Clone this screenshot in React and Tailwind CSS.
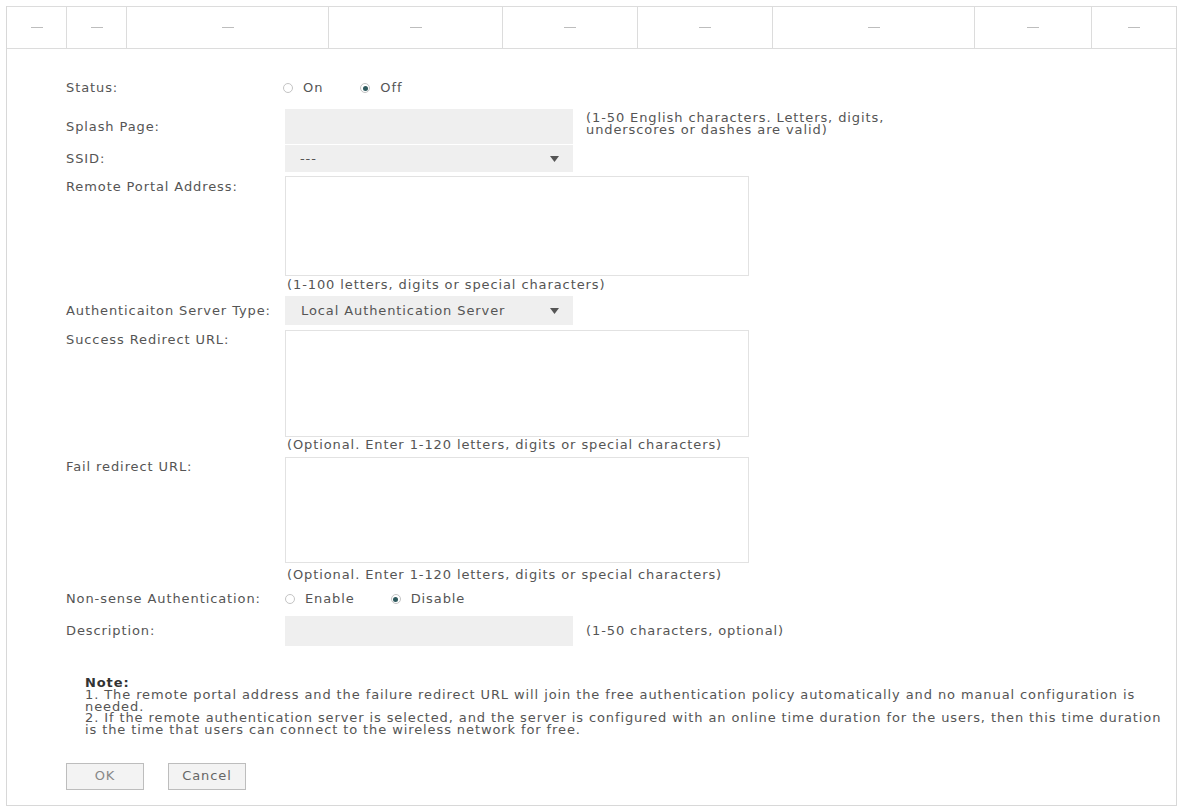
import React from "react";

const font = { fontFamily: '"DejaVu Sans", Verdana, sans-serif' };

const COLS = [60, 60, 202, 174, 135, 135, 202, 117, 86];

function Radio({ checked, label }) {
  return (
    <span className="inline-flex items-center gap-[10px]">
      <span className="grid h-[10px] w-[10px] place-items-center rounded-full border border-[#c4c4c4] bg-white">
        {checked && <span className="h-[5px] w-[5px] rounded-full bg-[#2f5a5e]" />}
      </span>
      <span>{label}</span>
    </span>
  );
}

function Arrow() {
  return (
    <svg width="9" height="6" viewBox="0 0 9 6" className="shrink-0">
      <path d="M0 0 L9 0 L4.5 6 Z" fill="#555" />
    </svg>
  );
}

function Row({ label, className = "", children }) {
  return (
    <div className={["flex", className].join(" ")}>
      <div className="w-[219px] shrink-0">{label}</div>
      <div className="flex-1">{children}</div>
    </div>
  );
}

export default function App() {
  return (
    <div className="h-[809px] w-full bg-white pl-[6px] pr-[2px] pt-[6px]" style={font}>
      <div className="flex h-[800px] flex-col border-l border-r border-b border-[#d8d8d8] text-[13px] leading-[16px] tracking-[0.9px] text-[#555]">
        <div className="flex h-[43px] border-t border-b border-[#dcdcdc]">
          {COLS.map((w, i) => (
            <div
              key={i}
              className={[
                "flex shrink-0 items-center justify-center",
                i < COLS.length - 1 ? "border-r border-[#dcdcdc]" : "flex-1",
              ].join(" ")}
              style={{ width: w }}
            >
              <span className="block h-px w-[12px] bg-[#bdbdbd]" />
            </div>
          ))}
        </div>

        <div className="flex flex-col pl-[59px] pt-[29px]">
          <Row label="Status:" className="h-[20px] items-center">
            <div className="-ml-[2px] flex items-center gap-[37px]">
              <Radio label="On" />
              <Radio checked label="Off" />
            </div>
          </Row>

          <Row label="Splash Page:" className="mt-[11px] items-center">
            <div className="flex items-start">
              <div className="h-[35px] w-[288px] bg-[#efefef]" />
              <div className="ml-[13px] mt-[3px] leading-[12px]">
                (1-50 English characters. Letters, digits,
                <br />
                underscores or dashes are valid)
              </div>
            </div>
          </Row>

          <Row label="SSID:" className="mt-[1px] items-center">
            <div className="flex h-[27px] w-[288px] items-center justify-between bg-[#efefef] pl-[15px] pr-[14px]">
              <span>---</span>
              <Arrow />
            </div>
          </Row>

          <Row label={<div className="pt-[3px]">Remote Portal Address:</div>} className="mt-[4px] items-start">
            <div className="h-[100px] w-[464px] border border-[#e2e2e2]" />
            <div className="mt-[1px] pl-[2px]">(1-100 letters, digits or special characters)</div>
          </Row>

          <Row label="Authenticaiton Server Type:" className="mt-[3px] items-center">
            <div className="flex h-[29px] w-[288px] items-center justify-between bg-[#efefef] pl-[16px] pr-[14px]">
              <span>Local Authentication Server</span>
              <Arrow />
            </div>
          </Row>

          <Row label={<div className="pt-[2px]">Success Redirect URL:</div>} className="mt-[5px] items-start">
            <div className="h-[107px] w-[464px] border border-[#e2e2e2]" />
            <div className="pl-[2px]">(Optional. Enter 1-120 letters, digits or special characters)</div>
          </Row>

          <Row label={<div className="pt-[2px]">Fail redirect URL:</div>} className="mt-[4px] items-start">
            <div className="h-[106px] w-[464px] border border-[#e2e2e2]" />
            <div className="mt-[4px] pl-[2px]">(Optional. Enter 1-120 letters, digits or special characters)</div>
          </Row>

          <Row label="Non-sense Authentication:" className="mt-[7px] h-[18px] items-center">
            <div className="flex items-center gap-[36px]">
              <Radio label="Enable" />
              <Radio checked label="Disable" />
            </div>
          </Row>

          <Row label="Description:" className="mt-[8px] items-center">
            <div className="flex items-center">
              <div className="h-[30px] w-[288px] bg-[#efefef]" />
              <span className="ml-[13px]">(1-50 characters, optional)</span>
            </div>
          </Row>

          <div className="mt-[31px] pl-[19px] pr-[2px] leading-[11.8px]">
            <div className="font-bold text-[#333]">Note:</div>
            <div>
              1. The remote portal address and the failure redirect URL will join the free authentication policy
              automatically and no manual configuration is needed.
            </div>
            <div>
              2. If the remote authentication server is selected, and the server is configured with an online time
              duration for the users, then this time duration is the time that users can connect to the wireless
              network for free.
            </div>
          </div>

          <div className="mt-[27px] flex gap-[24px]">
            <button className="h-[27px] w-[78px] border border-[#bdbdbd] bg-[#f3f3f3] text-[#888]">OK</button>
            <button className="h-[27px] w-[78px] border border-[#bdbdbd] bg-[#f3f3f3] text-[#666]">Cancel</button>
          </div>
        </div>
      </div>
    </div>
  );
}
